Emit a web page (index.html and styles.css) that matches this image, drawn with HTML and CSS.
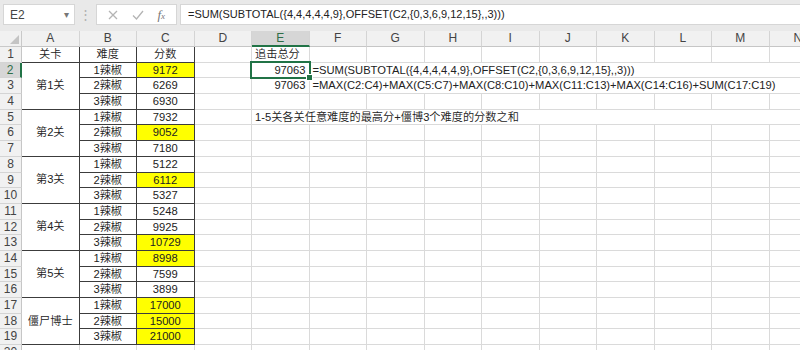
FILE: index.html
```html
<!DOCTYPE html>
<html lang="zh-CN">
<head>
    <meta charset="UTF-8">
    <meta name="viewport" content="width=device-width, initial-scale=1.0">
    <title>追击总分</title>
    <link rel="stylesheet" href="styles.css">
</head>
<body>
    <div class="fbar">
        <div class="namebox"><span>E2</span><span class="caret">&#9662;</span></div>
        <div class="grip">&#8942;</div>
        <div class="fbtns">
            <svg width="10" height="10" viewBox="0 0 10 10"><path d="M1 1L9 9M9 1L1 9" stroke="#b4b4b4" stroke-width="1.3" fill="none"/></svg>
            <svg width="12" height="10" viewBox="0 0 12 10"><path d="M1 5.5L4.5 9L11 1" stroke="#b4b4b4" stroke-width="1.3" fill="none"/></svg>
            <span class="fx"><i>f</i><i class="sub">x</i></span>
        </div>
        <div class="finput">=SUM(SUBTOTAL({4,4,4,4,4,9},OFFSET(C2,{0,3,6,9,12,15},,3)))</div>
    </div>
    <div class="sheet" id="sheet"></div>
    <script>
        const cols = ['A', 'B', 'C', 'D', 'E', 'F', 'G', 'H', 'I', 'J', 'K', 'L', 'M', 'N'];
        const levels = [
            { name: '第1关', scores: [9172, 6269, 6930], best: [0] },
            { name: '第2关', scores: [7932, 9052, 7180], best: [1] },
            { name: '第3关', scores: [5122, 6112, 5327], best: [1] },
            { name: '第4关', scores: [5248, 9925, 10729], best: [2] },
            { name: '第5关', scores: [8998, 7599, 3899], best: [0] },
            { name: '僵尸博士', scores: [17000, 15000, 21000], best: [0, 1, 2] }
        ];
        // cells right of the table: column -> [text, classes, span]
        const extra = {
            1: { E: ['追击总分', 'txt', 1] },
            2: { E: ['97063', 'num sel', 1], F: ['=SUM(SUBTOTAL({4,4,4,4,4,9},OFFSET(C2,{0,3,6,9,12,15},,3)))', 'txt', 9] },
            3: { E: ['97063', 'num', 1], F: ['=MAX(C2:C4)+MAX(C5:C7)+MAX(C8:C10)+MAX(C11:C13)+MAX(C14:C16)+SUM(C17:C19)', 'txt', 9] },
            5: { E: ['1-5关各关任意难度的最高分+僵博3个难度的分数之和', 'txt', 10] }
        };

        const sheet = document.getElementById('sheet');

        function cell(cls, text, span, rows) {
            const div = document.createElement('div');
            div.className = cls;
            if (text !== undefined) div.textContent = text;
            if (span > 1) div.style.gridColumn = 'span ' + span;
            if (rows > 1) div.style.gridRow = 'span ' + rows;
            sheet.appendChild(div);
            return div;
        }

        cell('corner');
        cols.forEach(c => cell(c === 'E' ? 'colhead on' : 'colhead', c));

        for (let r = 1; r <= 20; r++) {
            cell(r === 2 ? 'rowhead on' : 'rowhead', r);
            if (r === 1) {
                ['关卡', '难度', '分数'].forEach(t => cell('t', t));
            } else if (r <= 19) {
                const lv = levels[Math.floor((r - 2) / 3)];
                const k = (r - 2) % 3;
                if (k === 0) cell('t merged', lv.name, 1, 3);
                cell('t', (k + 1) + '辣椒');
                cell(lv.best.includes(k) ? 't hl' : 't', lv.scores[k]);
            } else {
                cell('', '');
                cell('', '');
                cell('', '');
            }
            const row = extra[r] || {};
            for (let i = 3; i < cols.length; i++) {
                const e = row[cols[i]];
                if (e) {
                    cell(e[1], e[0], e[2]);
                    i += e[2] - 1;
                } else {
                    cell('');
                }
            }
        }
    </script>
</body>
</html>
```

FILE: styles.css
```css
* {
    box-sizing: border-box;
}
body {
    margin: 0;
    height: 350px;
    overflow: hidden;
    background-color: #fff;
    color: #222;
    font-family: "Liberation Sans", "Noto Sans CJK SC", sans-serif;
}
.fbar {
    height: 31px;
    display: flex;
    align-items: flex-start;
    padding-top: 4px;
    background-color: #e9e9e9;
}
.namebox {
    width: 72px;
    height: 21px;
    margin-left: 3px;
    display: flex;
    align-items: center;
    justify-content: space-between;
    padding: 0 5px 0 6px;
    background-color: #fff;
    border: 1px solid #d6d6d6;
    font-size: 12px;
    color: #444;
}
.caret {
    font-size: 10px;
    color: #777;
}
.grip {
    width: 21px;
    line-height: 21px;
    text-align: center;
    font-size: 13px;
    color: #b0b0b0;
}
.fbtns {
    width: 81px;
    height: 21px;
    display: flex;
    align-items: center;
    justify-content: space-around;
    padding: 0 4px;
    background-color: #fff;
    border: 1px solid #d6d6d6;
}
.fx {
    font-family: "Liberation Serif", serif;
    font-size: 13px;
    color: #777;
}
.fx .sub {
    font-size: 9px;
}
.finput {
    flex: 1;
    height: 21px;
    margin-left: 3px;
    padding-left: 7px;
    background-color: #fff;
    border: 1px solid #d6d6d6;
    border-right: none;
    font-size: 11px;
    line-height: 19px;
    white-space: nowrap;
    overflow: hidden;
}
.sheet {
    display: grid;
    grid-template-columns: 22px repeat(14, 57.5px);
    grid-template-rows: 16px repeat(19, 15.7px) 20px;
}
.sheet > div {
    border-right: 1px solid #dadada;
    border-bottom: 1px solid #dadada;
    padding: 0 3px;
    font-size: 11.2px;
    font-weight: 350;
    line-height: 15px;
    white-space: nowrap;
}
.sheet > .corner {
    position: relative;
    background-color: #f1f1f1;
    border-color: #c9c9c9;
}
.corner::after {
    content: "";
    position: absolute;
    right: 2px;
    bottom: 2px;
    border-left: 9px solid transparent;
    border-bottom: 9px solid #c4c4c4;
}
.sheet > .colhead {
    background-color: #f1f1f1;
    border-right-color: #d4d4d4;
    border-bottom-color: #c6c6c6;
    text-align: center;
    color: #444;
    font-size: 12px;
    font-weight: 400;
}
.sheet > .rowhead {
    padding: 0;
    background-color: #f1f1f1;
    border-right-color: #c6c6c6;
    border-bottom-color: #d4d4d4;
    text-align: center;
    color: #444;
    font-size: 12px;
    font-weight: 400;
}
.sheet > .colhead.on {
    background-color: #d6d6d6;
    border-bottom: 2px solid #217346;
    color: #2f6e47;
}
.sheet > .rowhead.on {
    background-color: #d6d6d6;
    border-right: 2px solid #217346;
    color: #2f6e47;
}
.sheet > .t {
    border-right-color: #3c3c3c;
    border-bottom-color: #3c3c3c;
    text-align: center;
}
.sheet > .merged {
    display: flex;
    align-items: center;
    justify-content: center;
}
.sheet > .hl {
    background-color: #ffff00;
}
.sheet > .num {
    text-align: right;
}
.sheet > .txt {
    overflow: visible;
}
.sel {
    position: relative;
}
.sel::after {
    content: "";
    position: absolute;
    left: -2px;
    top: -2px;
    right: -2px;
    bottom: -2px;
    border: 2px solid #217346;
    z-index: 1;
}
.sel::before {
    content: "";
    position: absolute;
    right: -4px;
    bottom: -4px;
    width: 5px;
    height: 5px;
    background-color: #217346;
    border: 1px solid #fff;
    z-index: 2;
}
```
